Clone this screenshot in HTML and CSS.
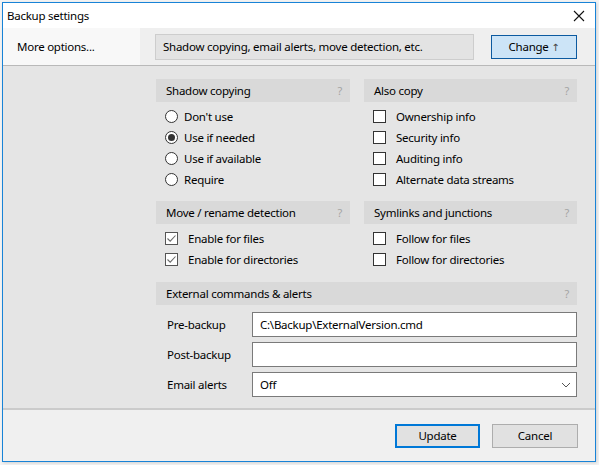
FILE: index.html
```html
<!DOCTYPE html>
<html>
<head>
<meta charset="utf-8">
<title>Backup settings</title>
<link rel="stylesheet" href="styles.css">
</head>
<body>
<div class="window">
  <div class="titlebar">
    <span class="title">Backup settings</span>
    <svg class="close" width="12" height="12" viewBox="0 0 12 12"><path d="M1 1 L11 11 M11 1 L1 11" stroke="#111" stroke-width="1.1" fill="none"/></svg>
  </div>
  <div class="options-row">
    <div class="more">More options...</div>
    <div class="options-right">
      <div class="summary">Shadow copying, email alerts, move detection, etc.</div>
      <button class="btn btn-change">Change <span class="arrow">↑</span></button>
    </div>
  </div>
  <div class="main">
    <div class="grid">
      <section class="group">
        <div class="ghead"><span>Shadow copying</span><span class="q">?</span></div>
        <div class="items">
          <div class="item"><span class="radio"></span>Don't use</div>
          <div class="item"><span class="radio checked"></span>Use if needed</div>
          <div class="item"><span class="radio"></span>Use if available</div>
          <div class="item"><span class="radio"></span>Require</div>
        </div>
      </section>
      <section class="group">
        <div class="ghead"><span>Also copy</span><span class="q">?</span></div>
        <div class="items items-r">
          <div class="item"><span class="box"></span>Ownership info</div>
          <div class="item"><span class="box"></span>Security info</div>
          <div class="item"><span class="box"></span>Auditing info</div>
          <div class="item"><span class="box"></span>Alternate data streams</div>
        </div>
      </section>
      <section class="group">
        <div class="ghead"><span>Move / rename detection</span><span class="q">?</span></div>
        <div class="items items-chk">
          <div class="item"><span class="box checked"><svg width="11" height="11" viewBox="0 0 11 11"><path d="M1.5 5.5 L4.2 8.2 L9.5 2.5" stroke="#6b6b6b" stroke-width="1.1" fill="none"/></svg></span>Enable for files</div>
          <div class="item"><span class="box checked"><svg width="11" height="11" viewBox="0 0 11 11"><path d="M1.5 5.5 L4.2 8.2 L9.5 2.5" stroke="#6b6b6b" stroke-width="1.1" fill="none"/></svg></span>Enable for directories</div>
        </div>
      </section>
      <section class="group">
        <div class="ghead"><span>Symlinks and junctions</span><span class="q">?</span></div>
        <div class="items items-r">
          <div class="item"><span class="box"></span>Follow for files</div>
          <div class="item"><span class="box"></span>Follow for directories</div>
        </div>
      </section>
      <section class="group wide">
        <div class="ghead"><span>External commands &amp; alerts</span><span class="q">?</span></div>
        <div class="form">
          <label class="flabel">Pre-backup</label>
          <div class="field">C:\Backup\ExternalVersion.cmd</div>
          <label class="flabel">Post-backup</label>
          <div class="field"></div>
          <label class="flabel">Email alerts</label>
          <div class="field select"><span>Off</span><svg width="10" height="6" viewBox="0 0 10 6"><path d="M1 1 L5 5 L9 1" stroke="#555" stroke-width="1" fill="none"/></svg></div>
        </div>
      </section>
    </div>
  </div>
  <div class="footer">
    <button class="btn btn-default">Update</button>
    <button class="btn">Cancel</button>
  </div>
</div>
</body>
</html>
```
FILE: styles.css
```css
* { box-sizing: border-box; }
html, body { margin: 0; padding: 0; }
body {
  width: 599px;
  height: 465px;
  background: #f4f4f4;
  font-family: "Noto Sans", "DejaVu Sans", sans-serif;
  font-size: 11.5px;
  letter-spacing: -0.25px;
  color: #000;
  overflow: hidden;
}
.window {
  margin: 2px 0 0 2px;
  width: 594px;
  height: 460px;
  border: 1px solid #1883d7;
  display: flex;
  flex-direction: column;
  background: #f0f0f0;
  box-shadow: 1px 1px 3px rgba(0,0,0,0.15);
}
.titlebar {
  height: 25px;
  background: #fff;
  display: flex;
  align-items: center;
  justify-content: space-between;
  padding: 0 10px 0 4px;
}
.close { margin-top: 1px; }
.options-row {
  height: 38px;
  display: flex;
  border-bottom: 1px solid #b9b9b9;
}
.more {
  width: 137px;
  background: #f8f8f8;
  display: flex;
  align-items: center;
  padding-left: 14px;
}
.options-right {
  flex: 1;
  display: flex;
  align-items: center;
  padding: 0 17px 0 15px;
  background: #efefef;
}
.summary {
  width: 319px;
  height: 26px;
  border: 1px solid #cdcdcd;
  background: #e3e3e3;
  display: flex;
  align-items: center;
  padding-left: 7px;
  margin-right: 17px;
}
.btn {
  font-family: inherit;
  font-size: 11.5px;
  letter-spacing: -0.25px;
  width: 86px;
  height: 24px;
  border: 1px solid #adadad;
  background: #e1e1e1;
  color: #000;
  padding: 0;
}
.btn-change {
  background: #cce4f7;
  border-color: #0c5aa0;
}
.arrow { color: #444; font-size: 10px; }
.main {
  flex: 1;
  background: #e5e5e5;
  padding: 13px 17px 0 153px;
  border-bottom: 2px solid #cbcbcb;
}
.grid {
  display: grid;
  grid-template-columns: 194px 213px;
  column-gap: 14px;
  row-gap: 11px;
}
.wide { grid-column: 1 / 3; margin-top: 1px; }
.ghead {
  height: 23px;
  background: #d9d9d9;
  display: flex;
  align-items: center;
  justify-content: space-between;
  padding: 0 8px 0 10px;
}
.q { color: #a4a4a4; font-size: 11px; }
.items { padding: 4px 0 0 9px; }
.items-r { padding-left: 9px; }
.items-chk { padding-left: 9px; }
.item {
  height: 21px;
  display: flex;
  align-items: center;
}
.radio {
  width: 13px;
  height: 13px;
  border: 1px solid #333;
  border-radius: 50%;
  background: #fff;
  margin-right: 6px;
  display: flex;
  align-items: center;
  justify-content: center;
}
.radio.checked::after {
  content: "";
  width: 7px;
  height: 7px;
  border-radius: 50%;
  background: #333;
}
.box {
  width: 13px;
  height: 13px;
  border: 1px solid #333;
  background: #fff;
  margin-right: 10px;
  display: flex;
  align-items: center;
  justify-content: center;
}
.items-chk .box { border-color: #555; }
.form {
  display: grid;
  grid-template-columns: 96px 1fr;
  row-gap: 5px;
  padding-top: 7px;
}
.flabel {
  display: flex;
  align-items: center;
  padding-left: 11px;
}
.field {
  height: 25px;
  background: #fff;
  border: 1px solid #7a7a7a;
  display: flex;
  align-items: center;
  padding-left: 7px;
}
.select {
  justify-content: space-between;
  padding-right: 5px;
}
.footer {
  height: 51px;
  background: #f0f0f0;
  display: flex;
  justify-content: flex-end;
  align-items: center;
  gap: 12px;
  padding: 0 17px 0 0;
}
.btn-default {
  border: 2px solid #0078d7;
  width: 85px;
}
```
